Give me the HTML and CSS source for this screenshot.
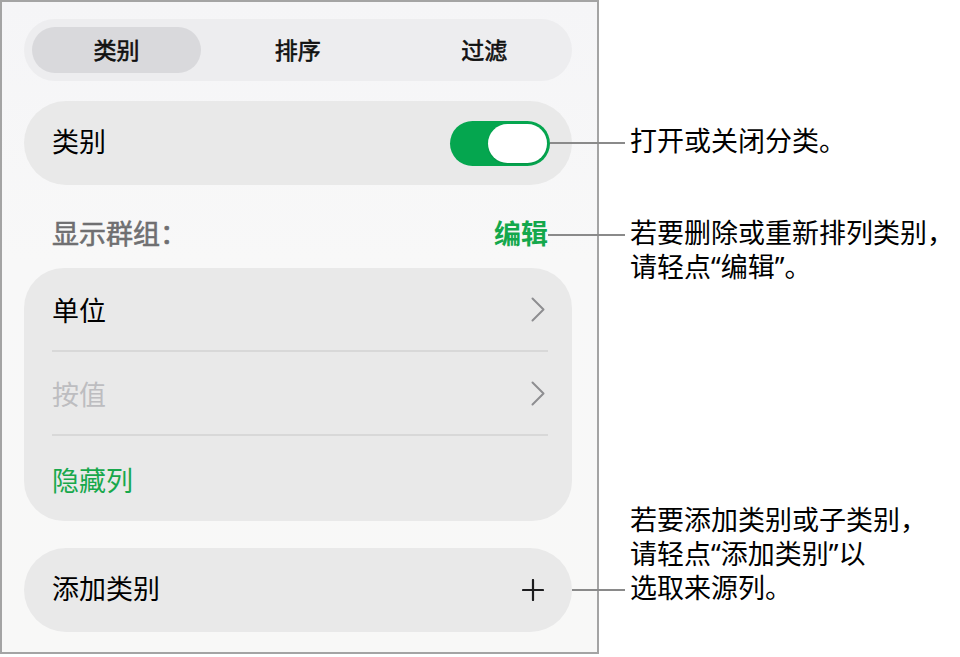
FILE: index.html
```html
<!DOCTYPE html>
<html lang="zh-CN">
<head>
<meta charset="utf-8">
<title>类别</title>
<link rel="stylesheet" href="styles.css">
</head>
<body>
<div class="page">
  <section class="panel">
    <div class="segmented">
      <span class="seg seg-on">类别</span>
      <span class="seg">排序</span>
      <span class="seg">过滤</span>
    </div>

    <div class="card card-row switch-row">
      <span class="label">类别</span>
      <span class="toggle"><span class="knob"></span></span>
    </div>

    <div class="group-head">
      <span class="group-title">显示群组：</span>
      <span class="edit">编辑</span>
    </div>

    <div class="card list">
      <div class="row">
        <span class="label">单位</span>
        <svg class="chevron" width="14" height="25" viewBox="0 0 14 25"><polyline points="1.5,1.5 12.5,12.5 1.5,23.5" fill="none" stroke="#8e8e91" stroke-width="2" stroke-linecap="round" stroke-linejoin="round"/></svg>
      </div>
      <div class="row row-dim">
        <span class="label">按值</span>
        <svg class="chevron" width="14" height="25" viewBox="0 0 14 25"><polyline points="1.5,1.5 12.5,12.5 1.5,23.5" fill="none" stroke="#8e8e91" stroke-width="2" stroke-linecap="round" stroke-linejoin="round"/></svg>
      </div>
      <div class="row row-action">
        <span class="label">隐藏列</span>
      </div>
    </div>

    <div class="card card-row add">
      <span class="label">添加类别</span>
      <svg class="plus" width="22" height="22" viewBox="0 0 22 22"><path d="M11 1V21M1 11H21" stroke="#1c1c1e" stroke-width="2.2" stroke-linecap="round"/></svg>
    </div>
  </section>

  <aside class="notes">
    <p class="note note-toggle">打开或关闭分类。</p>
    <p class="note note-edit">若要删除或重新排列类别，<br>请轻点“编辑”。</p>
    <p class="note note-add">若要添加类别或子类别，<br>请轻点“添加类别”以<br>选取来源列。</p>
  </aside>
</div>
</body>
</html>
```

FILE: styles.css
```css
* {
  box-sizing: border-box;
}

html, body {
  margin: 0;
  padding: 0;
  background: #ffffff;
}

body {
  font-family: "Noto Sans CJK SC", "Noto Sans", sans-serif;
  color: #000;
  width: 960px;
  height: 657px;
  overflow: hidden;
}

.page {
  display: flex;
  align-items: flex-start;
}

/* settings sheet */
.panel {
  width: 599px;
  height: 654px;
  flex: none;
  border: 2px solid #a4a4a4;
  background: linear-gradient(#f5f5f7, #f8f8f8 40%, #f8f8f7);
  padding: 17px 0 0 22px;
  display: flex;
  flex-direction: column;
}

.segmented {
  width: 548px;
  height: 62px;
  border-radius: 31px;
  background: #ededef;
  padding: 8px;
  display: grid;
  grid-template-columns: 169px 1fr 1fr;
  align-items: stretch;
}

.seg {
  display: flex;
  align-items: center;
  justify-content: center;
  font-size: 23px;
  font-weight: 400;
  -webkit-text-stroke: 0.6px currentColor;
  color: #111;
  border-radius: 24px;
  padding-bottom: 2px;
}

.seg:nth-child(2) {
  padding-left: 12px;
}

.seg:nth-child(3) {
  padding-left: 22px;
}

.seg-on {
  background: #d9d9dc;
}

.card {
  width: 548px;
  background: #e9e9e9;
}

.card-row {
  height: 84px;
  border-radius: 42px;
  display: flex;
  align-items: center;
  justify-content: space-between;
  padding: 0 22px 0 28px;
  position: relative;
}

.switch-row {
  margin-top: 20px;
}

.label {
  font-size: 27px;
  line-height: 34px;
  position: relative;
  top: -2px;
}

/* switch */
.toggle {
  position: relative;
  width: 100px;
  height: 45px;
  border-radius: 23px;
  background: #05a64f;
  display: flex;
  align-items: center;
  justify-content: flex-end;
  padding-right: 3px;
}

.knob {
  width: 59px;
  height: 39px;
  border-radius: 20px;
  background: #fff;
  box-shadow: 0 1px 2px rgba(0, 0, 0, 0.12);
}

/* callout leader lines */
.toggle::after,
.edit::after,
.add::after {
  content: "";
  position: absolute;
  left: 100%;
  top: 50%;
  height: 2px;
  margin-top: -1px;
  background: #8a8a8a;
}

.toggle::after {
  width: 75px;
}

.edit::after {
  width: 77px;
  margin-top: 1px;
}

.add::after {
  width: 53px;
}

.group-head {
  width: 548px;
  height: 83px;
  display: flex;
  justify-content: space-between;
  align-items: flex-start;
  padding: 31px 24px 0 28px;
}

.group-title {
  font-size: 27px;
  line-height: 34px;
  font-weight: 400;
  -webkit-text-stroke: 0.6px currentColor;
  color: #6f6f71;
}

.edit {
  position: relative;
  font-size: 27px;
  line-height: 34px;
  font-weight: 700;
  color: #14a84c;
}

/* grouped list */
.list {
  height: 253px;
  border-radius: 40px;
  padding: 0 24px 0 28px;
  display: flex;
  flex-direction: column;
}

.row {
  height: 84px;
  flex: none;
  display: flex;
  align-items: center;
  justify-content: space-between;
  padding-right: 3px;
  border-bottom: 2px solid #d8d8d8;
}

.row .label {
  top: 1px;
}

.row:last-child {
  border-bottom: none;
  height: 85px;
}

.row-dim .label {
  color: #bdbdc0;
}

.row-action .label {
  color: #18a84c;
}

.chevron {
  display: block;
}

.add {
  margin-top: 27px;
  padding-right: 28px;
}

.plus {
  display: block;
}

/* explanatory notes to the right */
.notes {
  padding-left: 31px;
  display: flex;
  flex-direction: column;
}

.note {
  margin: 0;
  font-family: "Noto Sans", "Noto Sans CJK SC", sans-serif;
  font-size: 27px;
  line-height: 34px;
  color: #000;
  white-space: nowrap;
}

.note-toggle {
  margin-top: 124px;
}

.note-edit {
  margin-top: 58px;
}

.note-add {
  margin-top: 219px;
}
```
